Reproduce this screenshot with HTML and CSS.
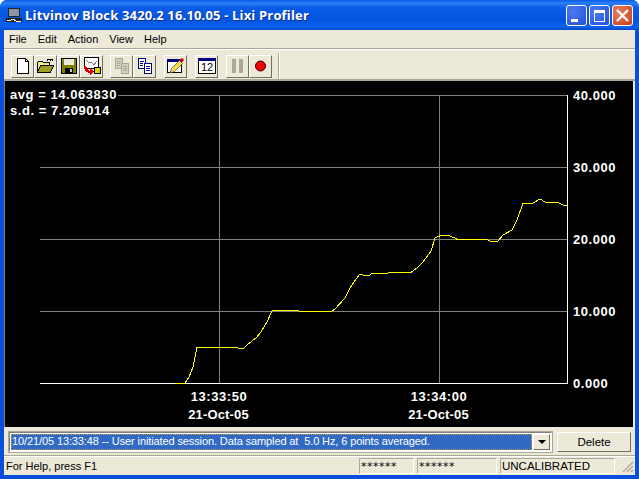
FILE: index.html
```html
<!DOCTYPE html>
<html lang="en">
<head>
    <meta charset="UTF-8">
    <title>Litvinov Block 3420.2 16.10.05 - Lixi Profiler</title>
    <link rel="stylesheet" href="styles.css">
</head>
<body>
    <div class="window">
        <div class="titlebar">
            <svg class="app-icon" width="16" height="16" viewBox="0 0 16 16" shape-rendering="crispEdges">
                <rect x="2" y="1" width="12" height="9" fill="#222"/>
                <rect x="3" y="2" width="10" height="7" fill="#8a95a8"/>
                <rect x="0" y="11" width="16" height="4" fill="#222"/>
                <path d="M1 13h4l2-1 3 2h5" stroke="#fff" fill="none"/>
            </svg>
            <span class="title-text">Litvinov Block 3420.2 16.10.05 - Lixi Profiler</span>
            <div class="caption-buttons">
                <div class="caption-btn">
                    <svg width="21" height="21" viewBox="0 0 21 21" shape-rendering="crispEdges"><rect x="5" y="14" width="7" height="3" fill="#fff"/></svg>
                </div>
                <div class="caption-btn">
                    <svg width="21" height="21" viewBox="0 0 21 21" shape-rendering="crispEdges"><path d="M5.5 7.5h10v9h-10z" fill="none" stroke="#fff"/><rect x="5" y="5" width="11" height="3" fill="#fff"/></svg>
                </div>
                <div class="caption-btn caption-close">
                    <svg width="21" height="21" viewBox="0 0 21 21"><path d="M5 5l11 11M16 5L5 16" stroke="#fff" stroke-width="2.4"/></svg>
                </div>
            </div>
        </div>

        <div class="client">
            <div class="menubar">
                <span>File</span>
                <span>Edit</span>
                <span>Action</span>
                <span>View</span>
                <span>Help</span>
            </div>

            <div class="toolbar">
                <div class="tool-group file-group">
                    <div class="tool-btn">
                        <svg width="16" height="16" viewBox="0 0 16 16" shape-rendering="crispEdges"><path d="M2.5 .5h8l3 3v12h-11z" fill="#fff" stroke="#000"/><path d="M10.5 .5v3h3" fill="none" stroke="#000"/></svg>
                    </div>
                    <div class="tool-btn">
                        <svg width="18" height="16" viewBox="0 0 18 16" shape-rendering="crispEdges"><path d="M.5 14.5v-10l1-1h4l1 1h6v3" fill="#f0f080" stroke="#000"/><path d="M.5 14.5l3-7h13l-3 7z" fill="#a0a020" stroke="#000"/><path d="M9.5 2.5h1v-1h3v1" fill="none" stroke="#000"/><path d="M13 1h3v3z" fill="#000"/></svg>
                    </div>
                    <div class="tool-btn">
                        <svg width="16" height="16" viewBox="0 0 16 16" shape-rendering="crispEdges"><path d="M.5 .5h15v15h-15z" fill="#808000" stroke="#000"/><rect x="3" y="1" width="10" height="6" fill="#e8e8d8"/><rect x="4" y="10" width="8" height="5" fill="#000"/><rect x="9" y="11" width="2" height="3" fill="#c8c8c8"/></svg>
                    </div>
                    <div class="tool-btn">
                        <svg width="18" height="18" viewBox="0 0 18 18" shape-rendering="crispEdges"><path d="M1.5 .5h14v11h-14z" fill="#fff" stroke="#000"/><path d="M3 3l3 3 2-1 3 3 3-4" fill="none" stroke="#808080"/><path d="M2 9q1 7 8 6" fill="none" stroke="#e00000" stroke-width="2.4"/><path d="M7 11l4 4-4 3z" fill="#e00000"/><rect x="11.5" y="10.5" width="6" height="6" fill="#d8d800" stroke="#000"/></svg>
                    </div>
                </div>
                <div class="tool-group">
                    <div class="tool-btn">
                        <svg width="16" height="16" viewBox="0 0 16 16" shape-rendering="crispEdges"><path d="M1.5 .5h7v10h-7z" fill="#d4d0c0" stroke="#a8a898"/><path d="M7.5 5.5h7v10h-7z" fill="#d4d0c0" stroke="#a8a898"/><path d="M3 3h4M3 5h3M3 7h3M9 8h4M9 10h4M9 12h4" stroke="#a8a898"/></svg>
                    </div>
                    <div class="tool-btn">
                        <svg width="16" height="16" viewBox="0 0 16 16" shape-rendering="crispEdges"><path d="M1.5 .5h7v10h-7z" fill="#fff" stroke="#000080"/><path d="M7.5 5.5h7v10h-7z" fill="#fff" stroke="#000080"/><path d="M3 3h4M3 5h3M3 7h3M9 8h4M9 10h4M9 12h4" stroke="#000080"/></svg>
                    </div>
                </div>
                <div class="tool-group">
                    <div class="tool-btn">
                        <svg width="19" height="18" viewBox="0 0 19 18"><rect x="1.5" y="2.5" width="14" height="13" fill="#fff" stroke="#000"/><rect x="1" y="2" width="15" height="3" fill="#000080"/><path d="M4 16l1.5-4.5 8-8 3 3-8 8z" fill="#f4dc48" stroke="#404040" stroke-width=".7"/><circle cx="16" cy="3" r="1.8" fill="#e00000"/></svg>
                    </div>
                </div>
                <div class="tool-group">
                    <div class="tool-btn">
                        <svg width="18" height="16" viewBox="0 0 18 16" shape-rendering="crispEdges"><rect x=".5" y=".5" width="17" height="15" fill="#fff" stroke="#000"/><rect x="0" y="0" width="18" height="3" fill="#000080"/><text class="cal-day" x="9" y="13">12</text></svg>
                    </div>
                </div>
                <div class="tool-group">
                    <div class="tool-btn">
                        <svg width="12" height="14" viewBox="0 0 12 14" shape-rendering="crispEdges"><rect x="0" y="0" width="4" height="14" fill="#aca899"/><rect x="7" y="0" width="4" height="14" fill="#aca899"/></svg>
                    </div>
                    <div class="tool-btn">
                        <svg width="12" height="12" viewBox="0 0 12 12"><circle cx="5.5" cy="6" r="5" fill="#f00000" stroke="#400000"/></svg>
                    </div>
                </div>
                <div class="toolbar-sep"></div>
            </div>

            <svg class="chart" width="628" height="346" viewBox="5 81 628 346" shape-rendering="crispEdges">
                <!-- grid -->
                <path class="grid" d="M40 95.5H567M40 167.5H567M40 239.5H567M40 311.5H567M219.5 95V383M439.5 95V383"/>
                <path class="axis" d="M40 383.5H567.5V95"/>
                <polyline class="trace" points="175,383 185,383 189,377 193,367 195,357 197,347 236,347 238,348 244,348 247,345 252,341 256,338 261,332 267,322 272,311 278,310 297,310 299,311 315,311 332,311 335,309 345,298 350,288 356,279 360,274 363,275 370,275 372,273 388,273 390,272 407,272 410,273 417,268 423,262 431,251 435,238 437,237 442,235 447,235 455,238 458,240 460,239 482,239 485,239 493,242 498,241 503,235 512,230 517,220 523,203 533,203 540,199 545,202 552,203 557,202 563,205 567,205"/>
                <!-- stats sit on the top grid line -->
                <rect x="8" y="86" width="110" height="34" fill="#000"/>
                <text class="chart-label" x="10" y="99">avg = 14.063830</text>
                <text class="chart-label" x="10" y="115">s.d. = 7.209014</text>
                <text class="chart-label" x="573" y="100">40.000</text>
                <text class="chart-label" x="573" y="172">30.000</text>
                <text class="chart-label" x="573" y="244">20.000</text>
                <text class="chart-label" x="573" y="316">10.000</text>
                <text class="chart-label" x="573" y="388">0.000</text>
                <text class="chart-label mid" x="219" y="401">13:33:50</text>
                <text class="chart-label mid date" x="218.5" y="419">21-Oct-05</text>
                <text class="chart-label mid" x="439" y="401">13:34:00</text>
                <text class="chart-label mid date" x="438.5" y="419">21-Oct-05</text>
            </svg>

            <div class="session-row">
                <div class="combo">
                    <div class="combo-text">10/21/05 13:33:48 -- User initiated session. Data sampled at  5.0 Hz, 6 points averaged.</div>
                    <div class="combo-arrow"><span class="arrow-down"></span></div>
                </div>
                <button class="delete-btn" type="button">Delete</button>
            </div>

            <div class="statusbar">
                <div class="status-help">For Help, press F1</div>
                <div class="status-cell cell-a">******</div>
                <div class="status-cell cell-b">******</div>
                <div class="status-cell cell-c">UNCALIBRATED</div>
                <svg class="grip" width="14" height="14" viewBox="0 0 14 14"><path d="M13 3L3 13M13 7L7 13M13 11L11 13" stroke="#aca899" stroke-width="1.4"/></svg>
            </div>
        </div>
    </div>
</body>
</html>
```

FILE: styles.css
```css
* {
    box-sizing: border-box;
}

body {
    margin: 0;
    width: 639px;
    height: 479px;
    overflow: hidden;
    background-color: #fff;
    font-family: "Liberation Sans", Arial, sans-serif;
    font-size: 11px;
    color: #000;
}

.window {
    width: 639px;
    height: 479px;
    display: flex;
    flex-direction: column;
    background-color: #0a4fdc;
    border-radius: 7px 7px 0 0;
    overflow: hidden;
}

.titlebar {
    height: 30px;
    flex: none;
    display: flex;
    align-items: center;
    padding: 0 6px 0 6px;
    background: linear-gradient(#0a5ae6 0, #2a80f6 3px, #0a5ce8 8px, #0355e0 20px, #0a62ee 27px, #0347c8 30px);
}

.app-icon {
    margin-right: 3px;
}

.title-text {
    flex: 1;
    font-family: "Open Sans", sans-serif;
    font-size: 13px;
    font-weight: 700;
    letter-spacing: .16px;
    color: #fff;
    text-shadow: 1px 1px 0 #0f2f90;
    white-space: pre;
}

.caption-buttons {
    display: flex;
    gap: 2px;
}

.caption-btn {
    width: 21px;
    height: 21px;
    border: 1px solid #fff;
    border-radius: 3px;
    background: radial-gradient(circle at 30% 30%, #4a7cf0, #2450d8);
    overflow: hidden;
}

.caption-btn svg {
    display: block;
    margin: -1px;
}

.caption-close {
    background: radial-gradient(circle at 30% 30%, #e88060, #c83c18);
}

.client {
    flex: 1;
    min-height: 0;
    display: flex;
    flex-direction: column;
    margin: 0 4px 4px;
    background-color: #ece9d8;
}

.menubar {
    height: 19px;
    flex: none;
    display: flex;
    align-items: center;
    gap: 11px;
    padding-left: 5px;
    border-bottom: 1px solid #aca899;
    box-shadow: 0 1px 0 #fff;
}

.toolbar {
    height: 32px;
    flex: none;
    display: flex;
    align-items: center;
    gap: 8px;
    padding: 4px 0 0 7px;
    border-bottom: 2px solid #aca899;
}

.tool-group {
    display: flex;
}

.file-group {
    margin-right: -1px;
}

.tool-btn {
    width: 23px;
    height: 23px;
    display: flex;
    align-items: center;
    justify-content: center;
    border: 1px solid;
    border-color: #fff #716f64 #716f64 #fff;
    background-color: #ece9d8;
}

.toolbar-sep {
    width: 2px;
    height: 26px;
    margin-left: -2px;
    border-left: 1px solid #aca899;
    border-right: 1px solid #fff;
}

.cal-day {
    font-family: "Liberation Sans", Arial, sans-serif;
    font-size: 11px;
    text-anchor: middle;
    fill: #000;
}

.chart {
    flex: none;
    display: block;
    box-sizing: content-box;
    border-left: 1px solid #808080;
    background-color: #000;
}

.grid {
    fill: none;
    stroke: #808080;
}

.axis {
    fill: none;
    stroke: #fff;
}

.trace {
    fill: none;
    stroke: #ffff00;
    stroke-width: 1;
}

.chart-label {
    font-family: "Liberation Sans", Arial, sans-serif;
    font-size: 13px;
    font-weight: 700;
    letter-spacing: .55px;
    fill: #fff;
}

.mid {
    text-anchor: middle;
}

.date {
    letter-spacing: .15px;
}

.session-row {
    height: 29px;
    flex: none;
    display: flex;
    align-items: center;
    padding: 2px 3px 0 5px;
    border-bottom: 1px solid #aca899;
}

.combo {
    width: 543px;
    height: 20px;
    display: flex;
    padding: 1px;
    border: 1px solid;
    border-color: #808080 #fff #fff #808080;
    outline: 1px solid #aca899;
    background-color: #fff;
}

.combo-text {
    flex: 1;
    min-width: 0;
    padding-left: 1px;
    background-color: #316ac5;
    color: #fff;
    line-height: 15px;
    letter-spacing: -.11px;
    white-space: pre;
    overflow: hidden;
    outline: 1px dotted #c8a040;
    outline-offset: -1px;
}

.combo-arrow {
    width: 17px;
    margin-left: 1px;
    display: flex;
    align-items: center;
    justify-content: center;
    border: 1px solid;
    border-color: #fff #716f64 #716f64 #fff;
    background-color: #ece9d8;
}

.arrow-down {
    border-style: solid;
    border-width: 4px 4px 0;
    border-color: #000 transparent transparent;
}

.delete-btn {
    width: 74px;
    height: 20px;
    margin-left: 5px;
    padding: 0;
    border: 1px solid;
    border-color: #fff #716f64 #716f64 #fff;
    background-color: #ece9d8;
    font-family: "Liberation Sans", Arial, sans-serif;
    font-size: 11.5px;
}

.statusbar {
    flex: 1;
    min-height: 0;
    display: flex;
    align-items: center;
    padding-top: 1px;
    box-shadow: inset 0 1px 0 #fff;
}

.status-help {
    width: 355px;
    padding-left: 2px;
}

.status-cell {
    height: 16px;
    line-height: 15px;
    padding-left: 1px;
    border: 1px solid;
    border-color: #aca899 #fff #fff #aca899;
    white-space: nowrap;
}

.cell-a {
    width: 55px;
    margin-right: 3px;
    font-family: "DejaVu Sans", sans-serif;
    letter-spacing: .5px;
}

.cell-b {
    width: 80px;
    margin-right: 3px;
    font-family: "DejaVu Sans", sans-serif;
    letter-spacing: .5px;
}

.cell-c {
    width: 115px;
    font-size: 11.5px;
}

.grip {
    margin-left: 5px;
}
```
